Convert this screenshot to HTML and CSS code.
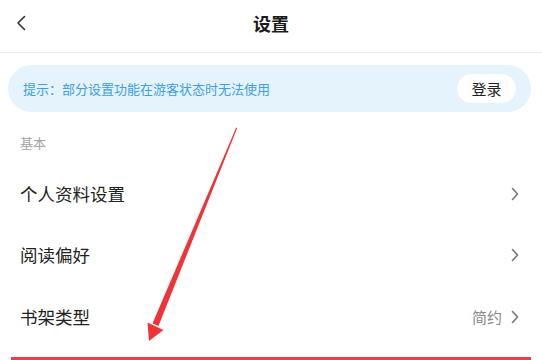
FILE: index.html
```html
<!DOCTYPE html>
<html lang="zh-CN">
<head>
<meta charset="utf-8">
<title>设置</title>
<link rel="stylesheet" href="styles.css">
</head>
<body>
<div class="page">
  <header class="topbar">
    <span class="back">
      <svg width="12" height="16" viewBox="0 0 12 16"><path d="M9.5 1.5 L3 8 L9.5 14.5" fill="none" stroke="#333" stroke-width="1.6" stroke-linecap="round" stroke-linejoin="round"/></svg>
    </span>
    <h1 class="title">设置</h1>
  </header>
  <div class="notice-wrap">
    <div class="notice">
      <span class="notice-text">提示：部分设置功能在游客状态时无法使用</span>
      <button class="login">登录</button>
    </div>
  </div>
  <div class="section-label">基本</div>
  <ul class="list">
    <li class="row"><span class="row-title">个人资料设置</span><span class="row-right"><svg class="chev" width="8" height="14" viewBox="0 0 8 14"><path d="M1.5 1.5 L6.5 7 L1.5 12.5" fill="none" stroke="#777" stroke-width="1.6" stroke-linecap="round" stroke-linejoin="round"/></svg></span></li>
    <li class="row"><span class="row-title">阅读偏好</span><span class="row-right"><svg class="chev" width="8" height="14" viewBox="0 0 8 14"><path d="M1.5 1.5 L6.5 7 L1.5 12.5" fill="none" stroke="#777" stroke-width="1.6" stroke-linecap="round" stroke-linejoin="round"/></svg></span></li>
    <li class="row"><span class="row-title">书架类型</span><span class="row-right"><span class="row-value">简约</span><svg class="chev" width="8" height="14" viewBox="0 0 8 14"><path d="M1.5 1.5 L6.5 7 L1.5 12.5" fill="none" stroke="#777" stroke-width="1.6" stroke-linecap="round" stroke-linejoin="round"/></svg></span></li>
  </ul>
  <div class="highlight"></div>
  <svg class="arrow" width="542" height="360" viewBox="0 0 542 360">
    <polygon points="236.2,127.5 237.2,128 158.5,326 152.5,323.5" fill="#ee3438"/>
    <polygon points="147.5,322.5 163.5,330 149,341" fill="#ee3438"/>
  </svg>
</div>
</body>
</html>
```

FILE: styles.css
```css
* { box-sizing: border-box; }
html, body { margin: 0; padding: 0; background: #fff; }
body {
  font-family: "Noto Sans CJK SC", "Noto Sans", sans-serif;
  color: #222;
}
.page {
  position: relative;
  width: 542px;
  height: 360px;
  overflow: hidden;
}
.topbar {
  height: 53px;
  border-bottom: 1px solid #ececec;
  display: flex;
  align-items: center;
  justify-content: center;
  position: relative;
}
.back {
  position: absolute;
  left: 15px;
  top: 15px;
  width: 12px;
  height: 16px;
  display: flex;
}
.title {
  margin: 0;
  font-size: 18px;
  font-weight: 700;
  line-height: 24px;
  margin-top: -7px;
  color: #1a1a1a;
}
.notice-wrap {
  padding: 12px 11px 0 8px;
}
.notice {
  height: 47px;
  border-radius: 24px;
  background: #e5f3fd;
  display: flex;
  align-items: center;
  justify-content: space-between;
  padding: 0 15px;
}
.notice-text {
  font-size: 13px;
  color: #3e9fe6;
  line-height: 18px;
}
.login {
  width: 59px;
  height: 29px;
  border: none;
  border-radius: 15px;
  background: #fff;
  font-family: inherit;
  font-size: 15px;
  color: #222;
  padding: 0;
  line-height: 29px;
}
.section-label {
  margin-top: 21px;
  padding-left: 20px;
  font-size: 13px;
  line-height: 20px;
  color: #a3a3a3;
}
.list {
  list-style: none;
  margin: 10px 0 0;
  padding: 0;
}
.row {
  height: 61.5px;
  display: flex;
  align-items: center;
  justify-content: space-between;
  padding: 0 23px 0 20px;
}
.row-title {
  font-size: 17.5px;
  line-height: 24px;
  color: #222;
}
.row-right {
  display: flex;
  align-items: center;
  gap: 9px;
}
.row-value {
  font-size: 15px;
  color: #8a8a8a;
  line-height: 20px;
}
.chev { display: block; }
.highlight {
  position: absolute;
  left: 11px;
  top: 357px;
  width: 520px;
  height: 50px;
  border: 3px solid #ea3f4b;
}
.arrow {
  position: absolute;
  left: 0;
  top: 0;
  pointer-events: none;
}
```
